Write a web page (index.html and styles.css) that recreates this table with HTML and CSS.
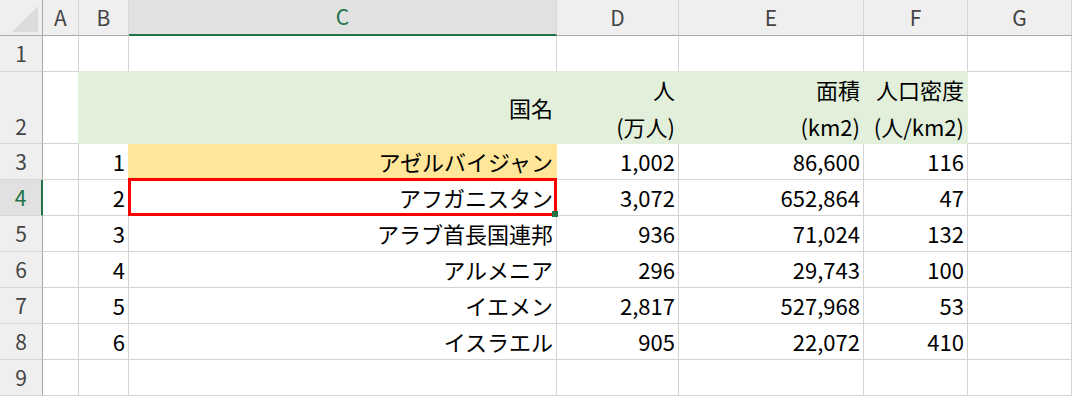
FILE: index.html
```html
<!DOCTYPE html>
<html lang="ja">
<head>
<meta charset="utf-8">
<title>Sheet</title>
<link rel="stylesheet" href="styles.css">
</head>
<body>
<div class="sheet">
  <div class="corner"><span class="tri"></span></div>
  <div class="ch">A</div>
  <div class="ch">B</div>
  <div class="ch ch-sel">C</div>
  <div class="ch">D</div>
  <div class="ch">E</div>
  <div class="ch">F</div>
  <div class="ch">G</div>

  <div class="rh">1</div>
  <div class="c"></div>
  <div class="c under-g"></div>
  <div class="c under-g"></div>
  <div class="c under-g"></div>
  <div class="c under-g"></div>
  <div class="c under-g"></div>
  <div class="c"></div>

  <div class="rh rh-tall">2</div>
  <div class="c left-g"></div>
  <div class="c g"></div>
  <div class="c g r">国名</div>
  <div class="c g r two">人<br>(万人)</div>
  <div class="c g r two">面積<br>(km2)</div>
  <div class="c g r two">人口密度<br>(人/km2)</div>
  <div class="c"></div>

  <div class="rh">3</div>
  <div class="c"></div>
  <div class="c r left-y">1</div>
  <div class="c r y">アゼルバイジャン</div>
  <div class="c r">1,002</div>
  <div class="c r">86,600</div>
  <div class="c r">116</div>
  <div class="c"></div>

  <div class="rh rh-sel">4</div>
  <div class="c"></div>
  <div class="c r">2</div>
  <div class="c r active">アフガニスタン<span class="handle"></span></div>
  <div class="c r">3,072</div>
  <div class="c r">652,864</div>
  <div class="c r">47</div>
  <div class="c"></div>

  <div class="rh">5</div>
  <div class="c"></div>
  <div class="c r">3</div>
  <div class="c r">アラブ首長国連邦</div>
  <div class="c r">936</div>
  <div class="c r">71,024</div>
  <div class="c r">132</div>
  <div class="c"></div>

  <div class="rh">6</div>
  <div class="c"></div>
  <div class="c r">4</div>
  <div class="c r">アルメニア</div>
  <div class="c r">296</div>
  <div class="c r">29,743</div>
  <div class="c r">100</div>
  <div class="c"></div>

  <div class="rh">7</div>
  <div class="c"></div>
  <div class="c r">5</div>
  <div class="c r">イエメン</div>
  <div class="c r">2,817</div>
  <div class="c r">527,968</div>
  <div class="c r">53</div>
  <div class="c"></div>

  <div class="rh">8</div>
  <div class="c"></div>
  <div class="c r">6</div>
  <div class="c r">イスラエル</div>
  <div class="c r">905</div>
  <div class="c r">22,072</div>
  <div class="c r">410</div>
  <div class="c"></div>

  <div class="rh">9</div>
  <div class="c"></div>
  <div class="c"></div>
  <div class="c"></div>
  <div class="c"></div>
  <div class="c"></div>
  <div class="c"></div>
  <div class="c"></div>
</div>
</body>
</html>
```

FILE: styles.css
```css
html, body {
  margin: 0;
  padding: 0;
  background: #ffffff;
  overflow: hidden;
}

.sheet {
  display: grid;
  grid-template-columns: 43px 36px 50px 428px 122px 185px 104px 104px;
  grid-template-rows: 36px 36px 72px 36px 36px 36px 36px 36px 36px 36px;
  width: 1072px;
  height: 396px;
  font-family: "Noto Sans CJK JP", "Noto Sans", sans-serif;
  font-size: 22px;
  color: #000000;
}

.sheet > div {
  box-sizing: border-box;
  display: flex;
  align-items: center;
  line-height: 1.2;
  white-space: nowrap;
}

/* column header */
.corner {
  background: #efefef;
  border-right: 1px solid #ababab;
  border-bottom: 1px solid #ababab;
  position: relative;
}

.tri {
  position: absolute;
  right: 4px;
  bottom: 3px;
  width: 0;
  height: 0;
  border-left: 26px solid transparent;
  border-bottom: 26px solid #dcdcdc;
}

.ch {
  background: #efefef;
  border-right: 1px solid #d6d6d6;
  border-bottom: 1px solid #ababab;
  justify-content: center;
  color: #444444;
  font-size: 21px;
}

.ch-sel {
  background: #e1e1e1;
  border-bottom: 2px solid #217346;
  color: #217346;
}

/* row header */
.rh {
  background: #efefef;
  border-right: 1px solid #ababab;
  border-bottom: 1px solid #d6d6d6;
  justify-content: center;
  color: #444444;
  font-size: 21px;
}

.rh-tall {
  align-items: flex-end !important;
  padding-bottom: 4px;
}

.rh-sel {
  background: #e1e1e1;
  border-right: 2px solid #217346;
  color: #217346;
}

/* cells */
.c {
  border-right: 1px solid #d4d4d4;
  border-bottom: 1px solid #d4d4d4;
}

.r {
  justify-content: flex-end;
  padding-right: 3px;
  text-align: right;
}

.two {
  line-height: 37px !important;
}

.g {
  background: #e2efda;
  border-right-color: #e2efda;
  border-bottom-color: #e2efda;
}

.under-g {
  border-bottom-color: #e2efda;
}

.left-g {
  border-right-color: #e2efda;
}

.y {
  background: #ffe699;
  border-right-color: #ffe699;
}

.left-y {
  border-right-color: #ffe699;
}

.active {
  position: relative;
}

.active::after {
  content: "";
  position: absolute;
  top: -2px;
  left: -1px;
  right: -1px;
  bottom: -1px;
  border: 3px solid #ff0000;
  pointer-events: none;
}

.handle {
  position: absolute;
  right: -2px;
  bottom: -2px;
  width: 6px;
  height: 6px;
  background: #217346;
  z-index: 2;
}
```
